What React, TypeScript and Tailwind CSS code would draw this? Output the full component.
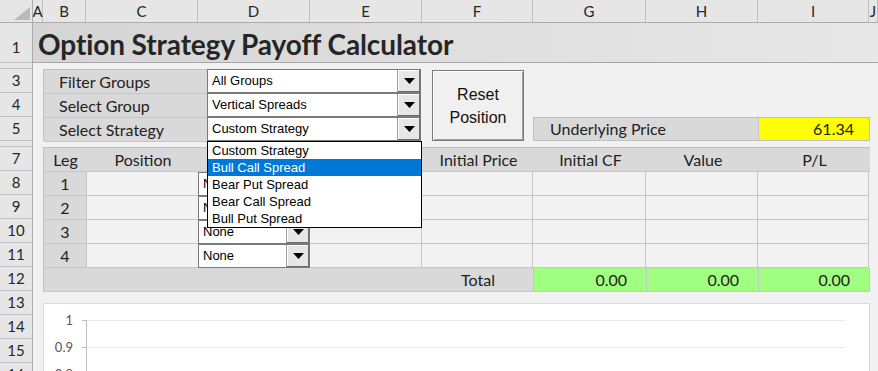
import clsx from 'clsx';

const cols = [
    { l: 'A', w: 'w-[10px]' },
    { l: 'B', w: 'w-[43px]' },
    { l: 'C', w: 'w-[112px]' },
    { l: 'D', w: 'w-[112px]' },
    { l: 'E', w: 'w-[112px]' },
    { l: 'F', w: 'w-[111px]' },
    { l: 'G', w: 'w-[113px]' },
    { l: 'H', w: 'w-[112px]' },
    { l: 'I', w: 'w-[111px]' },
    { l: 'J', w: 'flex-1' },
];

const rows = [
    { n: '1', h: 'h-[40px]', end: true },
    { n: '2', h: 'h-[6px]', hide: true },
    { n: '3', h: 'h-[24px]' },
    { n: '4', h: 'h-[24px]' },
    { n: '5', h: 'h-[24px]' },
    { n: '6', h: 'h-[6px]', hide: true },
    { n: '7', h: 'h-[24px]' },
    { n: '8', h: 'h-[24px]' },
    { n: '9', h: 'h-[24px]' },
    { n: '10', h: 'h-[24px]' },
    { n: '11', h: 'h-[24px]' },
    { n: '12', h: 'h-[24px]' },
    { n: '13', h: 'h-[24px]' },
    { n: '14', h: 'h-[24px]' },
    { n: '15', h: 'h-[24px]' },
    { n: '16', h: 'h-[24px]' },
];

const strategies = ['Custom Strategy', 'Bull Call Spread', 'Bear Put Spread', 'Bear Call Spread', 'Bull Put Spread'];

const calibri = "font-['Lato','Liberation_Sans',sans-serif]";
const tahoma = "font-['Liberation_Sans','DejaVu_Sans',sans-serif]";

function Arrow() {
    return (
        <svg width="11" height="6" viewBox="0 0 11 6">
            <polygon points="0,0 11,0 5.5,6" fill="#000" />
        </svg>
    );
}

function Combo({ text, className }: { text: string; className?: string }) {
    return (
        <div className={clsx('flex h-[24px] bg-white border border-[#7a7a7a]', className)}>
            <span className={clsx('flex-1 pl-[4px] text-[13px] leading-[22px] text-black whitespace-nowrap overflow-hidden', tahoma)}>{text}</span>
            <span className="w-[23px] flex items-center justify-center bg-[#e6e6e6] border-l border-[#a0a0a0] shadow-[inset_-1px_-1px_0_#6d6d6d,inset_1px_1px_0_#ffffff]">
                <Arrow />
            </span>
        </div>
    );
}

export default function App() {
    return (
        <div className={clsx('w-[878px] h-[371px] overflow-hidden bg-[#f1f1f1] text-[#222]', calibri)}>
            {/* column headers */}
            <div className="flex h-[23px] bg-[#e6e6e6] border-b border-[#ababab]">
                <div className="w-[33px] relative border-r border-[#ababab]">
                    <svg className="absolute right-[2px] bottom-[2px]" width="16" height="13" viewBox="0 0 16 13">
                        <polygon points="0,13 16,0 16,13" fill="#b9b9b9" />
                    </svg>
                </div>
                {cols.map((c) => (
                    <div key={c.l} className={clsx(c.w, 'flex items-center justify-center text-[15px] text-[#262626] border-r border-[#c0c0c0]')}>
                        {c.l}
                    </div>
                ))}
            </div>

            <div className="flex">
                {/* row headers */}
                <div className="w-[33px] shrink-0 bg-[#e6e6e6] border-r border-[#ababab]">
                    {rows.map((r) => (
                        <div
                            key={r.n}
                            className={clsx(
                                r.h,
                                'flex justify-center text-[15px] text-[#262626] border-b border-[#c0c0c0] overflow-hidden',
                                r.end ? 'items-end pb-[4px]' : 'items-center'
                            )}
                        >
                            {!r.hide && r.n}
                        </div>
                    ))}
                </div>

                {/* sheet */}
                <div className="relative flex-1 flex flex-col">
                    <div className="h-[40px] flex items-center pl-[5px] pt-[2px] border-b border-[#a6a6a6] bg-linear-to-r from-[#d5d5d5] to-[#e8e8e8]">
                        <span className="text-[28px] font-bold text-[#262626] tracking-[-0.1px]">Option Strategy Payoff Calculator</span>
                    </div>
                    <div className="h-[6px]" />

                    <div className="h-[72px] flex pl-[10px]">
                        <div className="w-[164px] flex flex-col border-l border-t border-[#c0c0c0]">
                            {['Filter Groups', 'Select Group', 'Select Strategy'].map((t) => (
                                <div key={t} className="h-[24px] flex items-center pl-[15px] bg-[#d9d9d9] border-b border-[#c6c6c6] text-[16px]">
                                    {t}
                                </div>
                            ))}
                        </div>
                        <div className="w-[214px] flex flex-col">
                            <Combo text="All Groups" />
                            <Combo text="Vertical Spreads" />
                            <Combo text="Custom Strategy" />
                        </div>
                        <button
                            className={clsx(
                                'ml-[11px] mt-[1px] w-[92px] h-[71px] bg-[#f0f0f0] border border-[#7a7a7a] shadow-[inset_1px_1px_0_#ffffff,inset_-1px_-1px_0_#a0a0a0] text-[16px] leading-[23px] text-[#111]',
                                tahoma
                            )}
                        >
                            Reset
                            <br />
                            Position
                        </button>
                        <div className="ml-[9px] flex flex-col justify-end">
                            <div className="flex h-[24px] border border-[#c0c0c0]">
                                <div className="w-[225px] flex items-center pl-[16px] bg-[#d9d9d9] border-r border-[#c6c6c6] text-[16px]">Underlying Price</div>
                                <div className="w-[110px] flex items-center justify-end pr-[15px] bg-[#ffff00] text-[16px]">61.34</div>
                            </div>
                        </div>
                    </div>
                    <div className="h-[6px]" />

                    {/* legs table */}
                    <div className="ml-[10px] w-[827px] border-l border-t border-[#c0c0c0] text-[16px]">
                        <div className="flex h-[24px] bg-[#d9d9d9] border-b border-[#c6c6c6]">
                            <div className="w-[43px] flex items-center justify-center">Leg</div>
                            <div className="w-[112px] flex items-center justify-center">Position</div>
                            <div className="w-[112px]" />
                            <div className="w-[112px]" />
                            <div className="w-[111px] flex items-center justify-center">Initial Price</div>
                            <div className="w-[113px] flex items-center justify-center">Initial CF</div>
                            <div className="w-[112px] flex items-center justify-center">Value</div>
                            <div className="w-[111px] flex items-center justify-center">P/L</div>
                        </div>
                        {['1', '2', '3', '4'].map((n) => (
                            <div key={n} className="flex h-[24px]">
                                <div className="w-[43px] flex items-center justify-center bg-[#d9d9d9] border-r border-b border-[#c6c6c6]">{n}</div>
                                <div className="w-[112px] bg-[#f2f2f2] border-r border-b border-[#c6c6c6]" />
                                <div className="w-[112px] -ml-px">
                                    <Combo text="None" />
                                </div>
                                <div className="w-[112px] bg-[#f2f2f2] border-r border-b border-[#c6c6c6]" />
                                <div className="w-[111px] bg-[#f2f2f2] border-r border-b border-[#c6c6c6]" />
                                <div className="w-[113px] bg-[#f2f2f2] border-r border-b border-[#c6c6c6]" />
                                <div className="w-[112px] bg-[#f2f2f2] border-r border-b border-[#c6c6c6]" />
                                <div className="w-[111px] bg-[#f2f2f2] border-r border-b border-[#c6c6c6]" />
                            </div>
                        ))}
                        <div className="flex h-[24px]">
                            <div className="w-[490px] flex bg-[#d9d9d9] border-r border-b border-[#c6c6c6]">
                                <div className="w-[379px]" />
                                <div className="flex-1 flex items-center justify-center">Total</div>
                            </div>
                            <div className="w-[113px] flex items-center justify-end pr-[19px] bg-[#a0ff80] border-r border-b border-[#c6c6c6]">0.00</div>
                            <div className="w-[112px] flex items-center justify-end pr-[19px] bg-[#a0ff80] border-r border-b border-[#c6c6c6]">0.00</div>
                            <div className="w-[111px] flex items-center justify-end pr-[19px] bg-[#a0ff80] border-r border-b border-[#c6c6c6]">0.00</div>
                        </div>
                    </div>

                    {/* payoff chart */}
                    <div className="ml-[10px] mt-[11px] w-[827px] h-[120px] bg-white border border-[#d9d9d9]">
                        <svg width="825" height="118" viewBox="0 0 825 118">
                            {[16, 43, 70].map((y) => (
                                <g key={y}>
                                    <line x1="38" y1={y + 0.5} x2="42" y2={y + 0.5} stroke="#bfbfbf" />
                                    <line x1="43" y1={y + 0.5} x2="801" y2={y + 0.5} stroke="#ebebeb" />
                                </g>
                            ))}
                            <line x1="42.5" y1="16" x2="42.5" y2="118" stroke="#bfbfbf" />
                            {[
                                { y: 16, t: '1' },
                                { y: 43, t: '0.9' },
                                { y: 70, t: '0.8' },
                            ].map((l) => (
                                <text key={l.t} x="29" y={l.y + 5} textAnchor="end" fontSize="13" fill="#595959" fontFamily="Lato, sans-serif">
                                    {l.t}
                                </text>
                            ))}
                        </svg>
                    </div>

                    {/* open strategy list */}
                    <div className={clsx('absolute left-[174px] top-[118px] w-[215px] bg-white border border-black', tahoma)}>
                        {strategies.map((s, i) => (
                            <div
                                key={s}
                                className={clsx(
                                    'h-[17px] pl-[4px] text-[13px] leading-[17px] whitespace-nowrap',
                                    i === 1 ? 'bg-[#0078d7] text-white' : 'text-black'
                                )}
                            >
                                {s}
                            </div>
                        ))}
                    </div>
                </div>
            </div>
        </div>
    );
}
